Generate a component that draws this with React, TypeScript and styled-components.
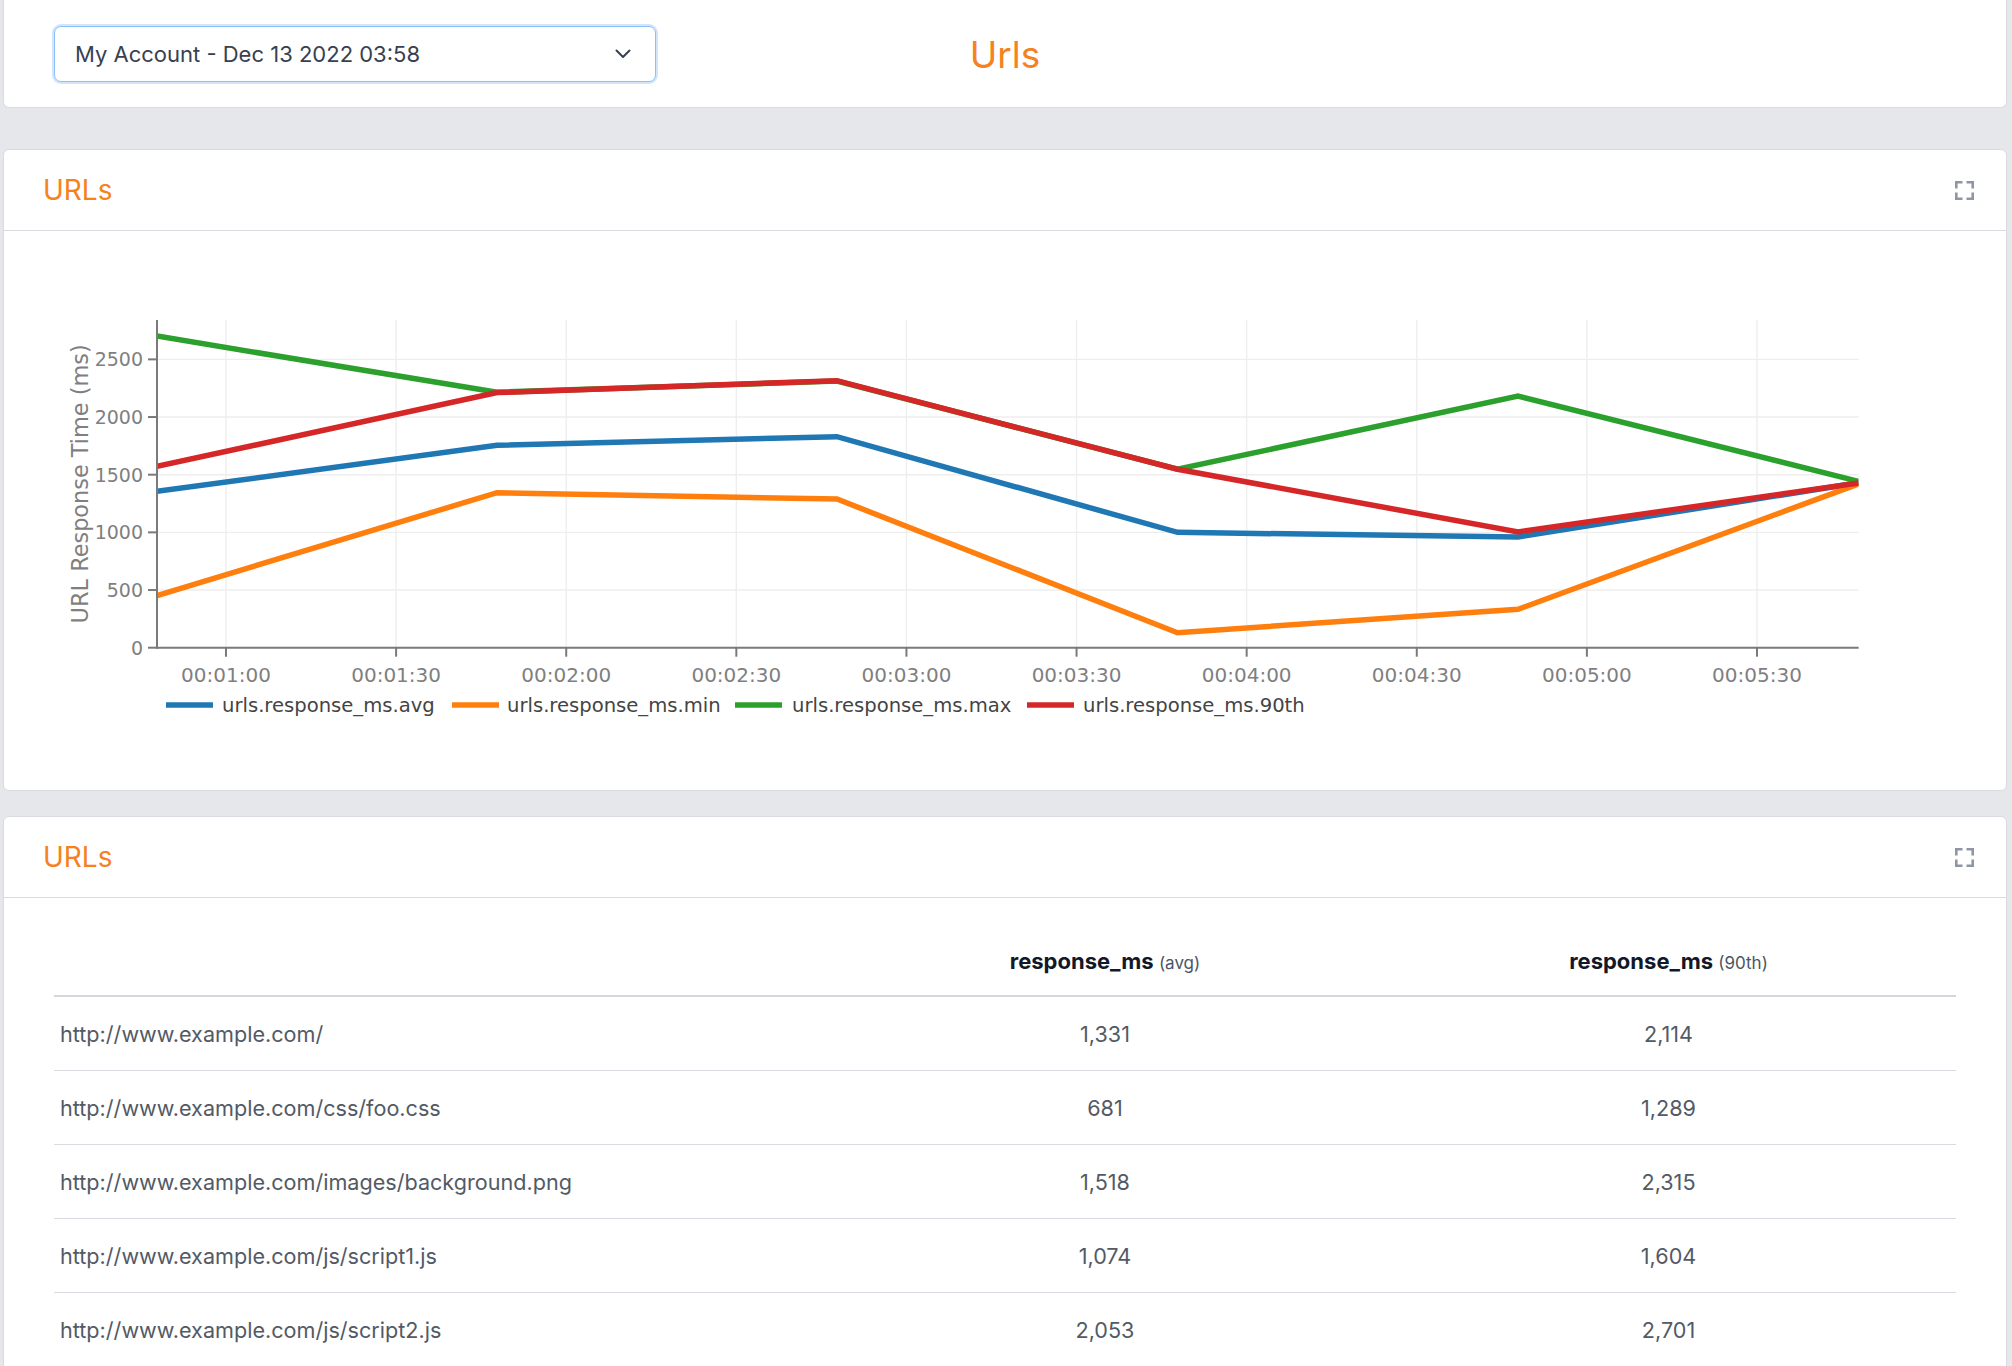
import React from 'react';
import styled, { createGlobalStyle } from 'styled-components';

const GlobalStyle = createGlobalStyle`
  * { box-sizing: border-box; }
  html, body { margin: 0; padding: 0; background: #e5e7eb; }
  body {
    font-family: Inter, "Noto Sans", "Liberation Sans", sans-serif;
    -webkit-font-smoothing: antialiased;
  }
`;

const ORANGE = '#f5821f';

const Page = styled.div`
  display: flex;
  flex-direction: column;
  padding: 0 5px 40px 3px;
`;

const Card = styled.section<{ $gapAfter?: number }>`
  background: #ffffff;
  border: 1px solid #d9dbe0;
  border-radius: 6px;
  margin-bottom: ${(p) => p.$gapAfter ?? 0}px;
`;

const TopBar = styled.header`
  background: #ffffff;
  border: 1px solid #d9dbe0;
  border-top: none;
  border-radius: 0 0 6px 6px;
  margin-bottom: 41px;
  display: grid;
  grid-template-columns: 1fr auto 1fr;
  align-items: center;
  padding: 26px 50px 25px;
`;

const SelectBox = styled.div`
  width: 602px;
  height: 56px;
  display: flex;
  align-items: center;
  justify-content: space-between;
  padding: 0 24px 0 20px;
  border: 1.5px solid #8cc0f7;
  border-radius: 7px;
  box-shadow: 0 0 0 2px #d3e5fb;
  font-size: 22px;
  color: #374151;
  background: #fff;
`;

const PageTitle = styled.h1`
  margin: 0;
  font-size: 37px;
  line-height: 1;
  font-weight: 400;
  color: ${ORANGE};
  text-align: center;
`;

const PanelHeader = styled.div`
  height: 81px;
  border-bottom: 1px solid #d9dbe0;
  display: flex;
  align-items: center;
  justify-content: space-between;
  padding: 0 32px 0 39px;
`;

const PanelTitle = styled.h2`
  margin: 0;
  font-size: 28px;
  font-weight: 400;
  color: ${ORANGE};
`;

const ExpandButton = styled.button`
  border: none;
  background: none;
  padding: 0;
  width: 19px;
  height: 19px;
  display: flex;
  cursor: pointer;
`;

const ChartBody = styled.div`
  height: 559px;
  display: flex;
`;

const ChartSvg = styled.svg`
  width: 100%;
  height: 559px;
  display: block;
  font-family: "DejaVu Sans", Verdana, sans-serif;
`;

const TableBody = styled.div`
  padding: 24px 50px 40px;
`;

const Table = styled.table`
  width: 100%;
  border-collapse: separate;
  border-spacing: 0;
  table-layout: fixed;
  font-size: 21.6px;
  color: #525a66;
`;

const Th = styled.th`
  height: 75px;
  padding: 5px 6px 0;
  text-align: center;
  font-size: 22px;
  font-weight: 700;
  color: #111827;
  border-bottom: 2px solid #d3d6db;
`;

const Sub = styled.span`
  font-size: 17px;
  font-weight: 400;
  color: #4b5563;
`;

const Td = styled.td<{ $align?: 'left' | 'center' }>`
  height: 74px;
  padding: 0 6px;
  text-align: ${(p) => p.$align ?? 'center'};
  border-bottom: 1px solid #d8dbe0;
  white-space: nowrap;
`;

const ChevronDown = () => (
  <svg width="16" height="10" viewBox="0 0 16 10" fill="none">
    <polyline points="1.5,1.5 8,8 14.5,1.5" stroke="#374151" strokeWidth="2" strokeLinecap="round" strokeLinejoin="round" />
  </svg>
);

const ExpandIcon = () => (
  <svg width="19" height="19" viewBox="0 0 19 19" fill="none">
    <g stroke="#8f96a3" strokeWidth="2.6" strokeLinecap="butt" strokeLinejoin="miter">
      <polyline points="1.3,7.5 1.3,1.3 7.5,1.3" />
      <polyline points="11.5,1.3 17.7,1.3 17.7,7.5" />
      <polyline points="17.7,11.5 17.7,17.7 11.5,17.7" />
      <polyline points="7.5,17.7 1.3,17.7 1.3,11.5" />
    </g>
  </svg>
);

/* ---------- chart geometry (page coordinates) ---------- */
const PLOT_L = 157;
const PLOT_R = 1858.6;
const PLOT_T = 320;
const PLOT_B = 647.7;
const yOf = (v: number) => PLOT_B - v * 0.115333;
const xOfT = (t: number) => 226 + (t - 60) * 5.6704;

const POINT_X = [157, 497, 837, 1177.5, 1518, 1858.6];

const SERIES = [
  { name: 'urls.response_ms.avg', color: '#1f77b4', values: [1356, 1755, 1830, 1000, 960, 1430], legendX: 166, textX: 222 },
  { name: 'urls.response_ms.min', color: '#ff7f0e', values: [452, 1344, 1289, 130, 333, 1420], legendX: 452, textX: 507 },
  { name: 'urls.response_ms.max', color: '#2ca02c', values: [2702, 2215, 2312, 1547, 2182, 1442], legendX: 735, textX: 792 },
  { name: 'urls.response_ms.90th', color: '#d62728', values: [1572, 2212, 2315, 1547, 1004, 1428], legendX: 1027, textX: 1083 },
];

const X_TICKS = [60, 90, 120, 150, 180, 210, 240, 270, 300, 330];
const Y_TICKS = [0, 500, 1000, 1500, 2000, 2500];

const fmtTime = (t: number) => {
  const m = Math.floor(t / 60);
  const s = t % 60;
  return `00:0${m}:${s === 0 ? '00' : s}`;
};

const ResponseChart = () => (
  <ChartSvg viewBox="4 231 2002 559" preserveAspectRatio="xMinYMin meet">
    <defs>
      <clipPath id="plotClip">
        <rect x={PLOT_L} y={PLOT_T - 6} width={PLOT_R - PLOT_L} height={PLOT_B - PLOT_T + 6} />
      </clipPath>
    </defs>
    {X_TICKS.map((t) => (
      <line key={`gx${t}`} x1={xOfT(t)} x2={xOfT(t)} y1={PLOT_T} y2={PLOT_B} stroke="#eeeeee" strokeWidth="1.4" />
    ))}
    {Y_TICKS.filter((v) => v > 0).map((v) => (
      <line key={`gy${v}`} x1={PLOT_L} x2={PLOT_R} y1={yOf(v)} y2={yOf(v)} stroke="#eeeeee" strokeWidth="1.4" />
    ))}
    <g clipPath="url(#plotClip)">
      {SERIES.map((s) => (
        <polyline
          key={s.name}
          points={s.values.map((v, i) => `${POINT_X[i]},${yOf(v)}`).join(' ')}
          fill="none"
          stroke={s.color}
          strokeWidth="5.5"
          strokeLinejoin="miter"
        />
      ))}
    </g>
    <line x1={PLOT_L} x2={PLOT_L} y1={PLOT_T} y2={PLOT_B + 1} stroke="#7a7a7a" strokeWidth="2" />
    <line x1={PLOT_L - 1} x2={PLOT_R} y1={PLOT_B} y2={PLOT_B} stroke="#7a7a7a" strokeWidth="2" />
    {Y_TICKS.map((v) => (
      <g key={`ty${v}`}>
        <line x1={148} x2={PLOT_L} y1={yOf(v)} y2={yOf(v)} stroke="#7a7a7a" strokeWidth="2" />
        <text x={143} y={yOf(v) + 6.8} textAnchor="end" fontSize="19" fill="#7f7f7f">
          {v}
        </text>
      </g>
    ))}
    {X_TICKS.map((t) => (
      <g key={`tx${t}`}>
        <line x1={xOfT(t)} x2={xOfT(t)} y1={PLOT_B} y2={PLOT_B + 9} stroke="#7a7a7a" strokeWidth="2" />
        <text x={xOfT(t)} y={682} textAnchor="middle" fontSize="20" fill="#7f7f7f">
          {fmtTime(t)}
        </text>
      </g>
    ))}
    <text
      transform={`translate(88, ${(PLOT_T + PLOT_B) / 2}) rotate(-90)`}
      textAnchor="middle"
      fontSize="22.4"
      fill="#7f7f7f"
    >
      URL Response Time (ms)
    </text>
    {SERIES.map((s) => (
      <g key={`lg${s.name}`}>
        <line x1={s.legendX} x2={s.legendX + 47} y1={705} y2={705} stroke={s.color} strokeWidth="5.5" />
        <text x={s.textX} y={712} fontSize="19.6" fill="#444444">
          {s.name}
        </text>
      </g>
    ))}
  </ChartSvg>
);

const ROWS = [
  { url: 'http://www.example.com/', avg: '1,331', p90: '2,114' },
  { url: 'http://www.example.com/css/foo.css', avg: '681', p90: '1,289' },
  { url: 'http://www.example.com/images/background.png', avg: '1,518', p90: '2,315' },
  { url: 'http://www.example.com/js/script1.js', avg: '1,074', p90: '1,604' },
  { url: 'http://www.example.com/js/script2.js', avg: '2,053', p90: '2,701' },
];

export default function App() {
  return (
    <>
      <GlobalStyle />
      <Page>
        <TopBar>
          <SelectBox>
            <span>My Account - Dec 13 2022 03:58</span>
            <ChevronDown />
          </SelectBox>
          <PageTitle>Urls</PageTitle>
          <div />
        </TopBar>

        <Card $gapAfter={25}>
          <PanelHeader>
            <PanelTitle>URLs</PanelTitle>
            <ExpandButton aria-label="Expand">
              <ExpandIcon />
            </ExpandButton>
          </PanelHeader>
          <ChartBody>
            <ResponseChart />
          </ChartBody>
        </Card>

        <Card>
          <PanelHeader>
            <PanelTitle>URLs</PanelTitle>
            <ExpandButton aria-label="Expand">
              <ExpandIcon />
            </ExpandButton>
          </PanelHeader>
          <TableBody>
            <Table>
              <colgroup>
                <col style={{ width: 775 }} />
                <col style={{ width: 552 }} />
                <col />
              </colgroup>
              <thead>
                <tr>
                  <Th />
                  <Th>
                    response_ms <Sub>(avg)</Sub>
                  </Th>
                  <Th>
                    response_ms <Sub>(90th)</Sub>
                  </Th>
                </tr>
              </thead>
              <tbody>
                {ROWS.map((r) => (
                  <tr key={r.url}>
                    <Td $align="left">{r.url}</Td>
                    <Td>{r.avg}</Td>
                    <Td>{r.p90}</Td>
                  </tr>
                ))}
              </tbody>
            </Table>
          </TableBody>
        </Card>
      </Page>
    </>
  );
}
